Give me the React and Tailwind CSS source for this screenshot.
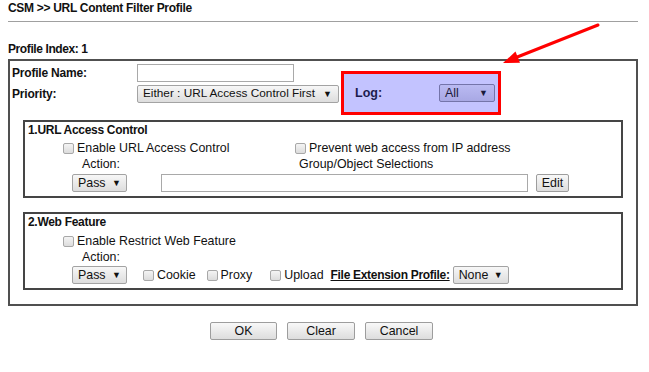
import React from "react";

const font = { fontFamily: "'Liberation Sans', Arial, sans-serif" };

function Sel({ label, w, cls = "" }) {
  return (
    <div
      className={`flex items-center justify-between h-[18px] border border-[#a3a3a3] rounded-[2px] bg-linear-to-b from-[#f7f7f7] to-[#dddddd] pl-[5px] pr-[5px] leading-none whitespace-nowrap text-[#111] ${cls}`}
      style={{ width: w }}
    >
      <span>{label}</span>
      <span className="text-[9px]">▼</span>
    </div>
  );
}

function Box() {
  return (
    <span className="inline-block w-[11px] h-[11px] rounded-[2px] border border-[#a8a8a8] bg-linear-to-b from-[#f4f4f4] to-[#dcdcdc] shrink-0" />
  );
}

function Btn({ children, w }) {
  return (
    <div
      className="flex items-center justify-center h-[18px] border border-[#9d9d9d] rounded-[2px] bg-linear-to-b from-[#f8f8f8] to-[#dddddd] text-[12.4px] leading-none text-[#111]"
      style={{ width: w }}
    >
      {children}
    </div>
  );
}

export default function App() {
  return (
    <div className="relative w-[649px] h-[372px] bg-white px-[8px] text-[#111] whitespace-nowrap" style={font}>
      <div className="h-[16px] pt-[1px] text-[12px] tracking-[-0.3px] leading-[14px] font-bold">
        CSM &gt;&gt; URL Content Filter Profile
      </div>
      <div className="mt-[5px] h-px w-[630px] bg-[#a0a0a0]" />
      <div className="mt-[20px] h-[14px] text-[12px] tracking-[-0.4px] leading-[14px] font-bold">Profile Index: 1</div>

      <div className="relative mt-[3px] w-[630px] border-2 border-[#505050] pb-[14px]">
        <div className="pt-[3px]">
          <div className="flex items-center h-[18px]">
            <div className="w-[127px] pl-[2px] text-[12px] tracking-[-0.2px] font-bold">Profile Name:</div>
            <div className="w-[157px] h-[18px] border border-[#a9a9a9] bg-white" />
          </div>
          <div className="flex items-center h-[18px] mt-[3px]">
            <div className="w-[127px] pl-[2px] text-[12px] tracking-[-0.2px] font-bold">Priority:</div>
            <Sel label="Either : URL Access Control First" w={202} cls="text-[11.8px] pr-[6px]" />
          </div>
        </div>

        <div className="absolute left-[331px] top-[10px] w-[160px] h-[44px] border-[3px] border-[#ff0000] bg-[#c3c3ff] flex items-center">
          <div className="w-[95px] pl-[11px] pt-[1px] text-[12.5px] font-bold text-[#1c1c4e]">Log:</div>
          <div className="flex items-center justify-between w-[56px] h-[18px] border border-[#7474aa] rounded-[2px] bg-linear-to-b from-[#babaf2] to-[#a8a8e4] pl-[5px] pr-[6px] text-[12.4px] leading-none text-[#1a1a3a]">
            <span>All</span>
            <span className="text-[9px]">▼</span>
          </div>
        </div>

        <div className="mt-[17px] ml-[13px] w-[600px] h-[78px] border-2 border-[#454545]">
          <div className="pt-[1px] pl-[3px] h-[15px] text-[12px] tracking-[-0.3px] leading-[14px] font-bold">1.URL Access Control</div>
          <div className="flex items-center h-[16px] mt-[3px] text-[12.4px]">
            <div className="w-[270px] pl-[38px] flex items-center gap-[3px]">
              <Box />
              <span>Enable URL Access Control</span>
            </div>
            <div className="flex items-center gap-[3px]">
              <Box />
              <span>Prevent web access from IP address</span>
            </div>
          </div>
          <div className="flex items-center h-[16px] text-[12.4px]">
            <div className="w-[274px] pl-[57px]">Action:</div>
            <div>Group/Object Selections</div>
          </div>
          <div className="flex items-center mt-[2px]">
            <div className="w-[47px]" />
            <Sel label="Pass" w={55} cls="text-[12.4px]" />
            <div className="ml-[34px] w-[367px] h-[18px] border border-[#a9a9a9] bg-white" />
            <div className="ml-[8px]">
              <Btn w={33}>Edit</Btn>
            </div>
          </div>
        </div>

        <div className="mt-[14px] ml-[13px] w-[600px] h-[78px] border-2 border-[#454545]">
          <div className="pt-[1px] pl-[3px] h-[15px] text-[12px] tracking-[-0.3px] leading-[14px] font-bold">2.Web Feature</div>
          <div className="flex items-center h-[16px] mt-[4px] text-[12.4px]">
            <div className="pl-[38px] flex items-center gap-[3px]">
              <Box />
              <span>Enable Restrict Web Feature</span>
            </div>
          </div>
          <div className="flex items-center h-[16px] text-[12.4px]">
            <div className="pl-[57px]">Action:</div>
          </div>
          <div className="flex items-center mt-[1px] text-[12.4px]">
            <div className="w-[47px]" />
            <Sel label="Pass" w={55} cls="text-[12.4px]" />
            <div className="ml-[16px] flex items-center gap-[3px]">
              <Box />
              <span>Cookie</span>
            </div>
            <div className="ml-[11px] flex items-center gap-[3px]">
              <Box />
              <span>Proxy</span>
            </div>
            <div className="ml-[18px] flex items-center gap-[3px]">
              <Box />
              <span>Upload</span>
            </div>
            <div className="ml-[7px] text-[12px] tracking-[-0.3px] font-bold underline">File Extension Profile:</div>
            <div className="ml-[3px]">
              <Sel label="None" w={56} cls="text-[12.4px]" />
            </div>
          </div>
        </div>
      </div>

      <div className="mt-[16px] ml-[202px] flex gap-[10px]">
        <Btn w={67}>OK</Btn>
        <Btn w={68}>Clear</Btn>
        <Btn w={68}>Cancel</Btn>
      </div>

      <svg className="absolute left-0 top-0 pointer-events-none" width="649" height="372">
        <line x1="598" y1="25" x2="516" y2="57.5" stroke="#ff0000" strokeWidth="3" strokeLinecap="round" />
        <polygon points="503,63 515.5,51.5 520,62.7" fill="#ff0000" />
      </svg>
    </div>
  );
}
